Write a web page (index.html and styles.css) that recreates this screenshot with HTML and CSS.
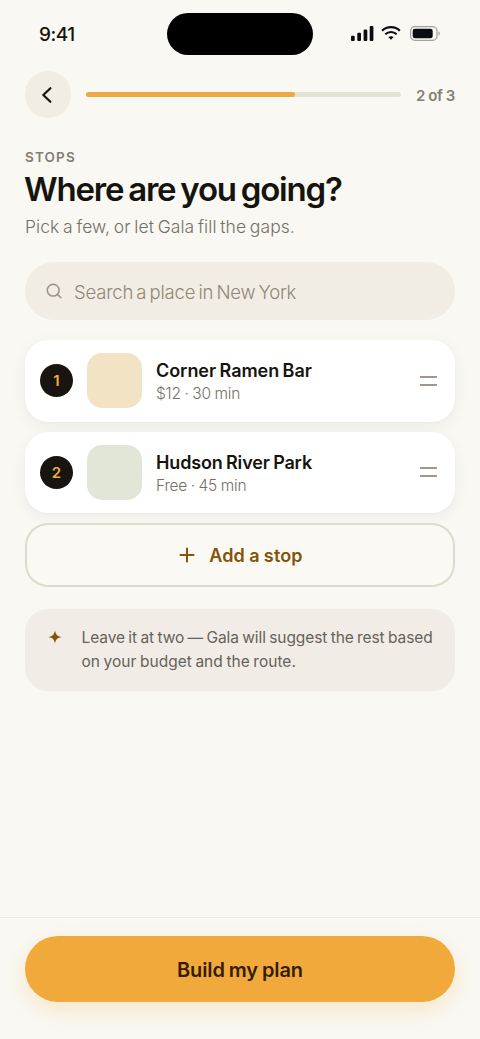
FILE: index.html
```html
<!DOCTYPE html>
<html lang="en">
<head>
<meta charset="utf-8">
<meta name="viewport" content="width=device-width, initial-scale=1">
<title>Stops</title>
<link rel="stylesheet" href="styles.css">
</head>
<body>
<div class="screen">
  <header class="status">
    <span class="time">9:41</span>
    <span class="island"></span>
    <span class="indicators">
      <svg width="23" height="15" viewBox="0 0 23 15" fill="#0b0b12"><rect x="0" y="9.7" width="3.700" height="5.3" rx="1.1"/><rect x="6.3" y="6.7" width="3.700" height="8.3" rx="1.1"/><rect x="12.6" y="3.6" width="3.700" height="11.4" rx="1.1"/><rect x="18.7" y="0" width="3.700" height="15" rx="1.1"/></svg>
      <svg class="wifi" width="20" height="15" viewBox="0 0 20 15" fill="none" stroke="#0b0b12" stroke-width="2.1"><path d="M1.1 4.7C6-.1 14-.1 18.900 4.700"/><path d="M4.300 8.200C7.500 5.200 12.500 5.200 15.700 8.200"/><path d="M7.300 11.100C8.800 9.800 11.200 9.800 12.700 11.100L10 13.800Z" fill="#0b0b12" stroke="none"/></svg>
      <svg class="battery" width="31" height="15" viewBox="0 0 31 15"><rect x=".6" y=".6" width="26.400" height="13.800" rx="4.300" fill="none" stroke="#a2a1a0" stroke-width="1.200"/><rect x="2.700" y="2.700" width="20" height="9.600" rx="2.300" fill="#0b0b12"/><path d="M28.500 5.200C30.300 6 30.300 9 28.500 9.800Z" fill="#a2a1a0"/></svg>
    </span>
  </header>

  <nav class="progress-row">
    <button class="back" aria-label="Back"><svg width="12" height="18" viewBox="0 0 12 18" fill="none" stroke="#16140f" stroke-width="2.200" stroke-linecap="round" stroke-linejoin="round"><path d="M9.400 2.200 2.300 9l7.100 6.800"/></svg></button>
    <div class="track"><div class="fill"></div></div>
    <span class="step">2 of 3</span>
  </nav>

  <main class="content">
    <p class="eyebrow">STOPS</p>
    <h1 class="title">Where are you going?</h1>
    <p class="subtitle">Pick a few, or let Gala fill the gaps.</p>

    <div class="search">
      <svg width="17" height="17" viewBox="0 0 17 17" fill="none" stroke="#9c9483" stroke-width="1.500" stroke-linecap="round"><circle cx="7.200" cy="7.200" r="5.900"/><path d="m11.600 11.600 3.300 3.200"/></svg>
      <span class="placeholder">Search a place in New York</span>
    </div>

    <div class="stops">
      <article class="stop">
        <span class="number">1</span>
        <span class="thumb sand"></span>
        <div class="info"><h2 class="name">Corner Ramen Bar</h2><p class="meta">$12 · 30 min</p></div>
        <span class="handle"></span>
      </article>
      <article class="stop">
        <span class="number">2</span>
        <span class="thumb sage"></span>
        <div class="info"><h2 class="name park">Hudson River Park</h2><p class="meta">Free · 45 min</p></div>
        <span class="handle"></span>
      </article>
      <button class="add">
        <svg width="16" height="16" viewBox="0 0 16 16" fill="none" stroke="#855308" stroke-width="2" stroke-linecap="round"><path d="M8 1.500v13M1.500 8h13"/></svg>
        <span class="add-label">Add a stop</span>
      </button>
    </div>

    <aside class="tip">
      <svg width="14" height="14" viewBox="0 0 14 14" fill="#855308"><path d="M7 .4C8 4.800 9.200 6 13.600 7 9.200 8 8 9.200 7 13.600 6 9.200 4.800 8 .4 7 4.800 6 6 4.800 7 .4Z"/></svg>
      <p class="tip-text"><span class="line-one">Leave it at two — Gala will suggest the rest based</span><br><span class="line-two">on your budget and the route.</span></p>
    </aside>
  </main>

  <footer class="footer"><button class="build"><span class="build-label">Build my plan</span></button></footer>
</div>
</body>
</html>
```
FILE: styles.css
```css
* { box-sizing: border-box; }
body, h1, h2, p { margin: 0; }
body { background: #f9f8f2; color: #16140f; font-family: Inter, "Liberation Sans", sans-serif; }
button { border: 0; padding: 0; font: inherit; color: inherit; }
svg { display: block; flex: none; }
span, h1, h2, p { white-space: nowrap; }

.screen { display: flex; flex-direction: column; width: 480px; height: 1039px; overflow: hidden; }

.status { display: grid; grid-template-columns: 1fr 146px 1fr; align-items: center; height: 42px; margin-top: 13px; flex: none; }
.time { padding-left: 39px; font-size: 19px; font-weight: 500; letter-spacing: -.5px; }
.island { height: 42px; border-radius: 21px; background: #000; }
.indicators { display: flex; align-items: center; padding: 0 0 1px 38px; }
.wifi { margin-left: 7px; }
.battery { margin-left: 9px; }

.progress-row { display: flex; align-items: center; height: 47px; margin-top: 16px; padding: 0 25px 0 24.500px; flex: none; }
.back { display: grid; place-items: center; width: 47px; height: 47px; border-radius: 50%; background: #f1ede5; }
.back svg { margin-right: 1px; }
.track { width: 316px; height: 5px; margin-left: 14.500px; border-radius: 3px; background: #e3e2d5; }
.fill { width: 209px; height: 5px; border-radius: 3px; background: #eaa943; }
.step { margin-left: 15px; padding-top: 1px; font-size: 15px; font-weight: 600; letter-spacing: -.4px; word-spacing: 0; color: #837e73; }

.content { display: flex; flex-direction: column; padding: 30px 25px 0; flex: 1; }
.eyebrow { font-size: 13.500px; font-weight: 600; letter-spacing: 1.150px; line-height: 18px; color: #837e73; }
.title { margin: 2px 0 0 -1px; font-size: 33px; font-weight: 600; letter-spacing: -1.200px; word-spacing: -2.200px; line-height: 42px; }
.subtitle { margin-top: 5px; font-size: 17.500px; font-weight: 300; letter-spacing: .05px; word-spacing: -1.200px; line-height: 24px; color: #757064; }

.search { display: flex; align-items: center; height: 58px; margin-top: 23px; padding: 0 0 0 21px; gap: 11px; border-radius: 29px; background: #f1ede5; }
.placeholder { padding-top: 1px; font-size: 18.500px; font-weight: 300; letter-spacing: -.2px; word-spacing: -1.800px; color: #908875; }

.stops { display: flex; flex-direction: column; gap: 10px; margin-top: 20px; }
.stop { display: flex; align-items: center; height: 81.500px; padding: 0 18px 0 15px; border-radius: 23px; background: #fff; box-shadow: 0 4px 16px rgba(40, 35, 20, .055), 0 1px 3px rgba(40, 35, 20, .03); }
.number { display: grid; place-items: center; width: 33px; height: 33px; border-radius: 50%; background: #181510; color: #efab45; font-size: 15px; font-weight: 600; }
.thumb { width: 55px; height: 55px; margin-left: 14px; border-radius: 15px; }
.sand { background: #f3e3c5; }
.sage { background: #e2e6d7; }
.info { margin-left: 14px; padding-top: 3px; flex: 1; }
.name { font-size: 18px; font-weight: 600; letter-spacing: -.05px; word-spacing: -1px; line-height: 23px; }
.park { letter-spacing: -.15px; }
.meta { font-size: 15.500px; font-weight: 300; letter-spacing: -.2px; word-spacing: -.5px; line-height: 23px; color: #757064; }
.handle { width: 17px; height: 10px; border-top: 2px solid #a0968a; border-bottom: 2px solid #a0968a; }
.add { display: flex; align-items: center; justify-content: center; gap: 14px; height: 64px; padding-left: 2px; border: 2px solid #dfdbcc; border-radius: 23px; background: #faf9f3; color: #855308; }
.add-label { font-size: 18px; font-weight: 600; letter-spacing: .15px; word-spacing: -.500px; }

.tip { display: flex; height: 82px; margin-top: 22px; padding: 17px 20px 0 23px; border-radius: 23px; background: #f1ede6; }
.tip svg { margin-top: 4px; }
.tip-text { margin-left: 19.500px; font-size: 15.500px; letter-spacing: -.1px; word-spacing: -.8px; line-height: 24.400px; color: #66625a; }
.line-two { letter-spacing: .02px; }

.footer { height: 122px; padding: 18px 25px 0; border-top: 1px solid #ecebe5; flex: none; }
.build { width: 430px; height: 66px; padding-top: 1px; border-radius: 33px; background: #f1a93b; color: #351c04; box-shadow: 0 8px 22px rgba(241, 169, 59, .22); }
.build-label { font-size: 20px; font-weight: 600; letter-spacing: -.1px; word-spacing: -1px; }
```
